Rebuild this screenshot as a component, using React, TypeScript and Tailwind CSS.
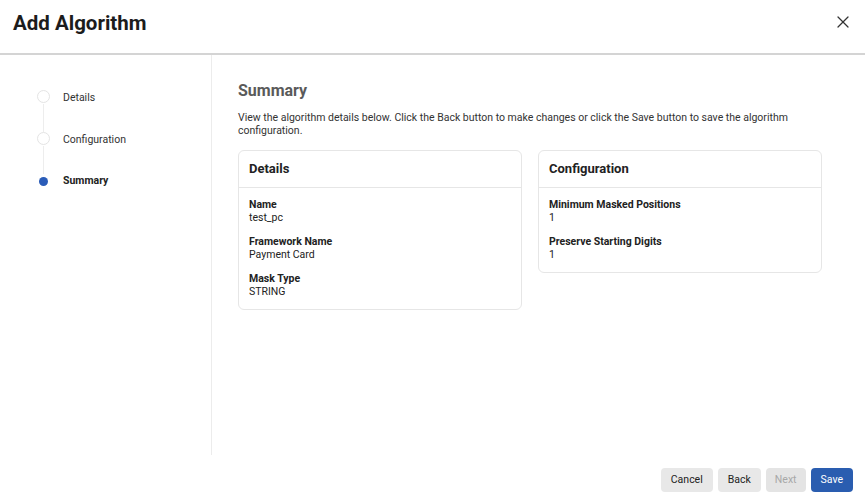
import { X } from "lucide-react";

type Field = { label: string; value: string };

const steps = [
  { label: "Details", active: false },
  { label: "Configuration", active: false },
  { label: "Summary", active: true },
];

const details: Field[] = [
  { label: "Name", value: "test_pc" },
  { label: "Framework Name", value: "Payment Card" },
  { label: "Mask Type", value: "STRING" },
];

const config: Field[] = [
  { label: "Minimum Masked Positions", value: "1" },
  { label: "Preserve Starting Digits", value: "1" },
];

function SummaryCard({ title, fields }: { title: string; fields: Field[] }) {
  return (
    <div className="flex-1 rounded-[6px] border border-[#e6e6e6] bg-white">
      <div className="h-[37px] px-[10px] flex items-center border-b border-[#e6e6e6]">
        <h3 className="text-[13px] font-bold text-[#222]">{title}</h3>
      </div>
      <div className="px-[10px] pt-[10px] pb-[11px] flex flex-col gap-[11px]">
        {fields.map((f) => (
          <div key={f.label} className="text-[10.5px] leading-[13px] text-[#222]">
            <div className="font-bold">{f.label}</div>
            <div>{f.value}</div>
          </div>
        ))}
      </div>
    </div>
  );
}

export default function App() {
  return (
    <div
      className="w-[865px] h-[500px] bg-white flex flex-col text-[#222]"
      style={{ fontFamily: "Roboto, 'Liberation Sans', sans-serif" }}
    >
      <header className="h-[55px] shrink-0 flex items-start justify-between pl-[13px] pr-[12px] pt-[10px] border-b-2 border-[#d4d4d4]">
        <h1 className="text-[20.5px] leading-[26px] font-bold text-[#1c1c1c]">Add Algorithm</h1>
        <button type="button" className="text-[#333] mt-[2px]" aria-label="Close">
          <X size={20} strokeWidth={1.5} />
        </button>
      </header>

      <div className="flex flex-1 min-h-0">
        <aside className="w-[212px] shrink-0 border-r border-[#ececec] pt-[35px] pl-[37px]">
          <ol className="flex flex-col">
            {steps.map((s, i) => (
              <li key={s.label} className="flex h-[41.5px] relative">
                {i < steps.length - 1 && (
                  <span className="absolute left-[6px] top-[14px] h-[28px] w-px bg-[#ededed]" />
                )}
                <span
                  className={
                    s.active
                      ? "mt-[2px] w-[13px] h-[13px] rounded-full bg-white flex items-center justify-center"
                      : "mt-0 w-[13px] h-[13px] rounded-full border border-[#e4e4e4] bg-white"
                  }
                >
                  {s.active && <span className="w-[9px] h-[9px] rounded-full bg-[#2a5cb8]" />}
                </span>
                <span
                  className={
                    s.active
                      ? "ml-[13px] text-[10.5px] font-bold text-[#222]"
                      : "ml-[13px] text-[10.5px] text-[#333]"
                  }
                >
                  {s.label}
                </span>
              </li>
            ))}
          </ol>
        </aside>

        <main className="flex-1 pl-[26px] pr-[43px] pt-[26px] flex flex-col">
          <h2 className="text-[16px] font-bold text-[#5a5a5a] leading-[20px]">Summary</h2>
          <p className="mt-[10px] text-[10.5px] leading-[13px] text-[#333]">
            View the algorithm details below. Click the Back button to make changes or click the Save button to save the
            algorithm configuration.
          </p>
          <div className="mt-[13px] flex items-start gap-[16px]">
            <SummaryCard title="Details" fields={details} />
            <SummaryCard title="Configuration" fields={config} />
          </div>
        </main>
      </div>

      <footer className="h-[45px] shrink-0 flex items-start justify-end gap-[5px] pr-[12px] pt-[13px]">
        <button type="button" className="h-[24px] px-[10px] rounded-[4px] bg-[#e8e8e8] text-[10.5px] text-[#222]">
          Cancel
        </button>
        <button type="button" className="h-[24px] px-[10px] rounded-[4px] bg-[#e8e8e8] text-[10.5px] text-[#222]">
          Back
        </button>
        <button
          type="button"
          disabled
          className="h-[24px] px-[9px] rounded-[4px] bg-[#e4e4e4] text-[10.5px] text-[#a8a8a8]"
        >
          Next
        </button>
        <button type="button" className="h-[24px] px-[10px] rounded-[4px] bg-[#2a5db0] text-[10.5px] text-white">
          Save
        </button>
      </footer>
    </div>
  );
}
